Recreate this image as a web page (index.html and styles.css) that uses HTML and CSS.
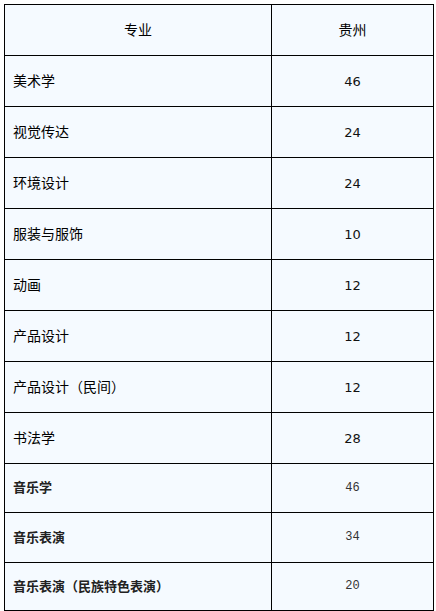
FILE: index.html
```html
<!DOCTYPE html>
<html lang="zh-CN">
<head>
<meta charset="utf-8">
<link rel="stylesheet" href="styles.css">
</head>
<body>
<table class="grid">
  <tr class="head"><td class="major">专业</td><td class="num">贵州</td></tr>
  <tr class="row"><td class="name">美术学</td><td class="num">46</td></tr>
  <tr class="row"><td class="name">视觉传达</td><td class="num">24</td></tr>
  <tr class="row"><td class="name">环境设计</td><td class="num">24</td></tr>
  <tr class="row"><td class="name">服装与服饰</td><td class="num">10</td></tr>
  <tr class="row"><td class="name">动画</td><td class="num">12</td></tr>
  <tr class="row"><td class="name">产品设计</td><td class="num">12</td></tr>
  <tr class="row"><td class="name">产品设计（民间）</td><td class="num">12</td></tr>
  <tr class="row"><td class="name">书法学</td><td class="num">28</td></tr>
  <tr class="music r1"><td class="name">音乐学</td><td class="num">46</td></tr>
  <tr class="music r2"><td class="name">音乐表演</td><td class="num">34</td></tr>
  <tr class="music r3"><td class="name">音乐表演（民族特色表演）</td><td class="num">20</td></tr>
</table>
</body>
</html>
```
FILE: styles.css
```css
html, body {
  margin: 0;
  padding: 0;
  background: #ffffff;
}
.grid {
  margin: 4px 0 0 4px;
  border-spacing: 0;
  border-top: 1px solid #000;
  border-left: 1px solid #000;
  background: #f5faff;
  font-family: "Noto Sans CJK SC", sans-serif;
  font-size: 14px;
  color: #000;
}
.grid td {
  box-sizing: border-box;
  border-right: 1px solid #000;
  border-bottom: 1px solid #000;
  padding: 0 0 3px 0;
  vertical-align: middle;
}
.grid td.major, .grid td.name {
  width: 267px;
}
.grid td.num {
  width: 162px;
  text-align: center;
}
.grid td.major {
  text-align: center;
}
.grid td.name {
  padding-left: 8px;
}
.head td, .row td {
  height: 51px;
}
.row .num {
  font-family: "DejaVu Sans", sans-serif;
  font-size: 13px;
  color: #111;
  padding-bottom: 0;
}
.music .name {
  font-weight: bold;
  font-size: 13px;
  color: #222;
}
.music .num {
  font-family: "Liberation Mono", monospace;
  font-size: 12px;
  color: #333;
  padding-bottom: 1px;
}
.r1 td { height: 49px; }
.r2 td { height: 50px; }
.r3 td { height: 48px; }
```
